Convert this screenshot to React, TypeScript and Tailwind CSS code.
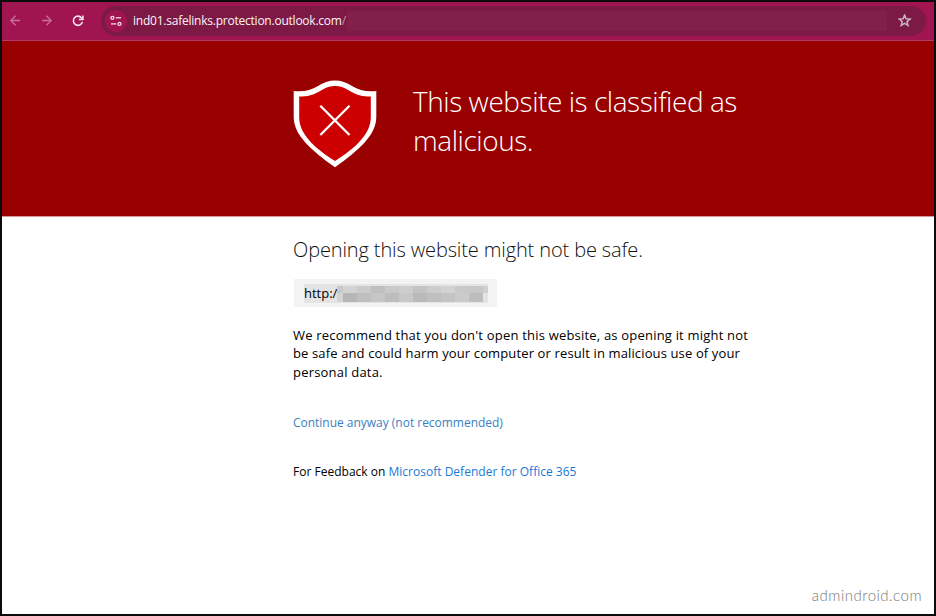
import clsx from "clsx";
import { ReactNode } from "react";

const MOSAIC_TOP = ["bg-[#c9c9c9]", "bg-[#d3d3d3]", "bg-[#cbcbcb]", "bg-[#bfbfbf]", "bg-[#c9c9c9]", "bg-[#cdcdcd]", "bg-[#c3c3c3]", "bg-[#cccccc]", "bg-[#d2d2d2]", "bg-[#c9c9c9]", "bg-[#c8c8c8]", "bg-[#d0d0d0]"];
const MOSAIC_BOTTOM = ["bg-[#d3d3d3]", "bg-[#b6b6b6]", "bg-[#bfbfbf]", "bg-[#c6c6c6]", "bg-[#bdbdbd]", "bg-[#c8c8c8]", "bg-[#bababa]", "bg-[#c0c0c0]", "bg-[#c4c4c4]", "bg-[#cbcbcb]", "bg-[#bdbdbd]", "bg-[#e2e4e7]"];

const BackArrow = ({ flip }: { flip?: boolean }) => (
    <svg width="12" height="12" viewBox="0 0 12 12" className={clsx("shrink-0", flip && "-scale-x-100")} fill="none" stroke="#c9709a" strokeWidth="1.3">
        <path d="M11 5.5H1.8M6.600 0.700L1.800 5.500L6.600 10.300" />
    </svg>
);

const ReloadIcon = () => (
    <svg width="12" height="12" viewBox="0 0 12 12" className="shrink-0" fill="none" stroke="#f6e3ec" strokeWidth="1.6">
        <path d="M10.4 7A4.6 4.6 0 1 1 9.6 2.9L10.4 3.9" />
        <path d="M10.9 0.4V4.5H6.8" />
    </svg>
);

const TuneIcon = () => (
    <svg width="12" height="12" viewBox="0 0 12 12" fill="none" stroke="#f3dbe6" strokeWidth="1.3">
        <circle cx="2.4" cy="2.8" r="1.5" />
        <path d="M5.8 2.8H11" />
        <circle cx="9.5" cy="8.9" r="1.5" />
        <path d="M1 8.9H6.2" />
    </svg>
);

const StarIcon = () => (
    <svg width="14" height="14" viewBox="0 0 14 14" className="shrink-0" fill="none" stroke="#c9b3be" strokeWidth="1.5">
        <path d="M6.6 1L8.1 4.7L12.1 5L9 7.6L10 11.5L6.6 9.4L3.2 11.5L4.2 7.6L1.1 5L5.1 4.7Z" />
    </svg>
);

const ShieldIcon = () => (
    <svg width="84" height="88" viewBox="0 0 84 88" className="shrink-0">
        <path d="M0.7 11C10 12 18 10.5 25 6C30 2.5 36 0.5 42 0.5C48 0.5 54 2.5 59 6C66 10.5 74 12 83.3 11V37C83.3 55 66 70 42 87.3C18 70 0.7 55 0.7 37Z" fill="#ffffff" />
        <path d="M6.2 16.6C14 16.6 21 14.8 28 10.4C33 7.3 37 6 42 6C47 6 51 7.3 56 10.4C63 14.8 70 16.6 77.8 16.6V37C77.8 54 63 67.5 42 81C21 67.5 6.2 54 6.2 37Z" fill="#cc0000" />
        <path d="M27.3 25.8L56.5 55M56.5 25.8L27.3 55" stroke="#ffffff" strokeWidth="2.3" />
    </svg>
);

const MosaicRow = ({ tones, height }: { tones: string[]; height: string }) => (
    <div className={clsx("flex", height)}>
        {tones.map((tone, index) => (
            <span key={index} className={clsx(index === 0 ? "w-[6px]" : index === tones.length - 1 ? "w-[5px]" : "w-[14px]", tone)} />
        ))}
    </div>
);

const Link = ({ children, className }: { children: ReactNode; className?: string }) => (
    <a href="#" className={className}>
        {children}
    </a>
);

const BrowserBar = () => (
    <header className="flex h-[39px] shrink-0 items-center border-b border-[#b23a6e] bg-[#a0144f] pb-px pl-[7px] pr-[8px]">
        <BackArrow />
        <div className="ml-[20px] flex">
            <BackArrow flip />
        </div>
        <div className="ml-[19px] flex">
            <ReloadIcon />
        </div>
        <div className="ml-[17px] flex h-[30px] flex-1 items-center rounded-full bg-[#7c1a45] pl-1 pr-[14px]">
            <span className="flex size-[22px] items-center justify-center rounded-full bg-[#a0144f]">
                <TuneIcon />
            </span>
            <span className="ml-[6px] whitespace-nowrap text-[12px] leading-[18px] tracking-[-0.23px] text-[#fdf4f8]">
                ind01.safelinks.protection.outlook.com<span className="text-[#c893ab]">/</span>
            </span>
            <span className="ml-px h-[20px] flex-1 bg-[#80204b]" />
            <span className="ml-[11px] flex">
                <StarIcon />
            </span>
        </div>
    </header>
);

const App = () => {
    return (
        <div className="flex h-[616px] w-[936px] flex-col overflow-hidden border-2 border-[#0b0b0b] bg-white font-['Open_Sans',sans-serif] text-black">
            <BrowserBar />

            <section className="flex h-[176px] shrink-0 border-b border-[#d99] bg-[#990000] pl-[291px] pt-[39px]">
                <ShieldIcon />
                <h1 className="ml-[36px] mt-[2px] whitespace-nowrap text-[28px] font-light leading-[38.5px] tracking-[-0.45px] text-white">
                    This website is classified as
                    <br />
                    malicious.
                </h1>
            </section>

            <main className="flex flex-1 flex-col items-start whitespace-nowrap pl-[291px] pt-[19px]">
                <h2 className="text-[20px] font-light leading-[28px] tracking-[-0.13px] text-[#111111]">Opening this website might not be safe.</h2>

                <div className="ml-px mt-[15px] flex h-[28px] w-[203px] items-center bg-[#f3f3f3] pl-[10px]">
                    <div className="flex h-[19px] items-center bg-[#e4e4e4]">
                        <span className="w-[33px] text-[13px] leading-[19px]">http:/</span>
                        <div className="pt-[2px]">
                            <MosaicRow tones={MOSAIC_TOP} height="h-[7px]" />
                            <MosaicRow tones={MOSAIC_BOTTOM} height="h-[9px]" />
                        </div>
                    </div>
                </div>

                <p className="mt-[19px] text-[13px] leading-[18.4px] text-black">
                    <span className="tracking-[0.2px]">We recommend that you don't open this website, as opening it might not</span>
                    <br />
                    <span className="tracking-[0.13px]">be safe and could harm your computer or result in malicious use of your</span>
                    <br />
                    <span className="tracking-[0.2px]">personal data.</span>
                </p>

                <Link className="mt-[32.5px] text-[12px] leading-[18px] tracking-[-0.02px] text-[#3a7fc1]">Continue anyway (not recommended)</Link>

                <p className="mt-[31px] text-[12px] leading-[18px] tracking-[0.01px]">
                    For Feedback on <Link className="text-[#1a7ad4]">Microsoft Defender for Office 365</Link>
                </p>

                <span className="mb-[9px] mr-[12px] mt-auto self-end font-['Lato',sans-serif] text-[15px] font-light leading-[20px] tracking-[0.5px] text-[#777777]">
                    admindroid.com
                </span>
            </main>
        </div>
    );
};

export default App;
